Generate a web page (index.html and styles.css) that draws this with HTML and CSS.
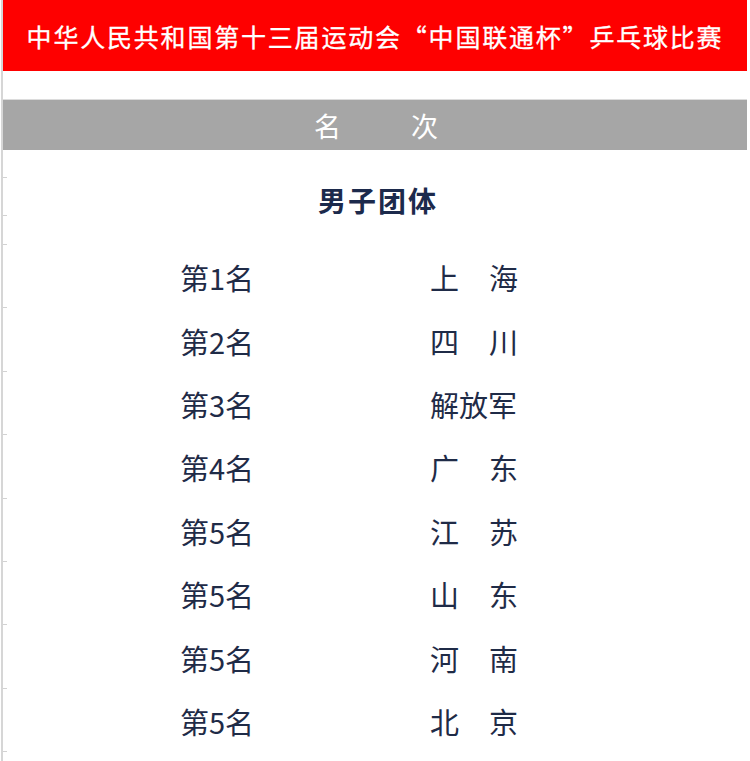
FILE: index.html
```html
<!DOCTYPE html>
<html lang="zh-CN">
<head>
<meta charset="utf-8">
<title>乒乓球比赛 名次</title>
<link rel="stylesheet" href="styles.css">
</head>
<body>
<div class="sheet">
  <div class="title">中华人民共和国第十三届运动会“中国联通杯”乒乓球比赛</div>
  <div class="gap"></div>
  <div class="band"><span>名</span><span>次</span></div>
  <div class="group"><span class="group-name">男子团体</span></div>
  <div class="row"><span class="rank">第1名</span><span class="team"><span>上</span><span>海</span></span></div>
  <div class="row"><span class="rank">第2名</span><span class="team"><span>四</span><span>川</span></span></div>
  <div class="row"><span class="rank">第3名</span><span class="team"><span>解放军</span></span></div>
  <div class="row"><span class="rank">第4名</span><span class="team"><span>广</span><span>东</span></span></div>
  <div class="row"><span class="rank">第5名</span><span class="team"><span>江</span><span>苏</span></span></div>
  <div class="row"><span class="rank">第5名</span><span class="team"><span>山</span><span>东</span></span></div>
  <div class="row"><span class="rank">第5名</span><span class="team"><span>河</span><span>南</span></span></div>
  <div class="row"><span class="rank">第5名</span><span class="team"><span>北</span><span>京</span></span></div>
  <div class="row last"></div>
</div>
</body>
</html>
```
FILE: styles.css
```css
html, body {
  margin: 0;
  padding: 0;
  background: #ffffff;
}

body {
  font-family: "Noto Sans CJK SC", "Noto Sans", sans-serif;
  overflow: hidden;
}

.sheet {
  margin-left: 1px;
  border-left: 2px solid #d6d6d6;
  min-height: 761px;
  box-sizing: border-box;
}

.title {
  height: 71px;
  margin-right: 3px;
  background: #fe0000;
  color: #ffffff;
  font-size: 25px;
  letter-spacing: 1.8px;
  display: flex;
  align-items: center;
  justify-content: center;
  white-space: nowrap;
  -webkit-text-stroke: 0.3px #ffffff;
}

.gap {
  height: 28px;
  border-bottom: 1px solid #dcdcdc;
  margin-right: 3px;
}

.band {
  height: 50px;
  margin-right: 3px;
  background: #a6a6a6;
  color: #ffffff;
  font-size: 27px;
  display: flex;
  align-items: center;
  justify-content: center;
  gap: 70px;
  padding-left: 2px;
}

.group {
  height: 95px;
  display: flex;
  flex-direction: column;
  align-items: center;
  color: #1c2a4c;
  background:
    linear-gradient(#d2d2d2, #d2d2d2) no-repeat 0 27px / 4px 1px,
    linear-gradient(#d2d2d2, #d2d2d2) no-repeat 0 65px / 4px 1px,
    linear-gradient(#d2d2d2, #d2d2d2) no-repeat 0 94px / 4px 1px;
}

.group-name {
  margin-top: 30px;
  font-size: 28px;
  font-weight: bold;
  letter-spacing: 2px;
  line-height: 40px;
  padding-left: 3px;
}

.row {
  height: 63.4px;
  display: flex;
  align-items: center;
  color: #1f2b47;
  font-size: 29px;
  padding-top: 1px;
  box-sizing: border-box;
  background: linear-gradient(#d2d2d2, #d2d2d2) no-repeat left bottom / 4px 1px;
}

.rank {
  margin-left: 177px;
  width: 250px;
}

.team {
  width: 88px;
  display: flex;
  justify-content: space-between;
}

.last {
  height: 20px;
}
```
